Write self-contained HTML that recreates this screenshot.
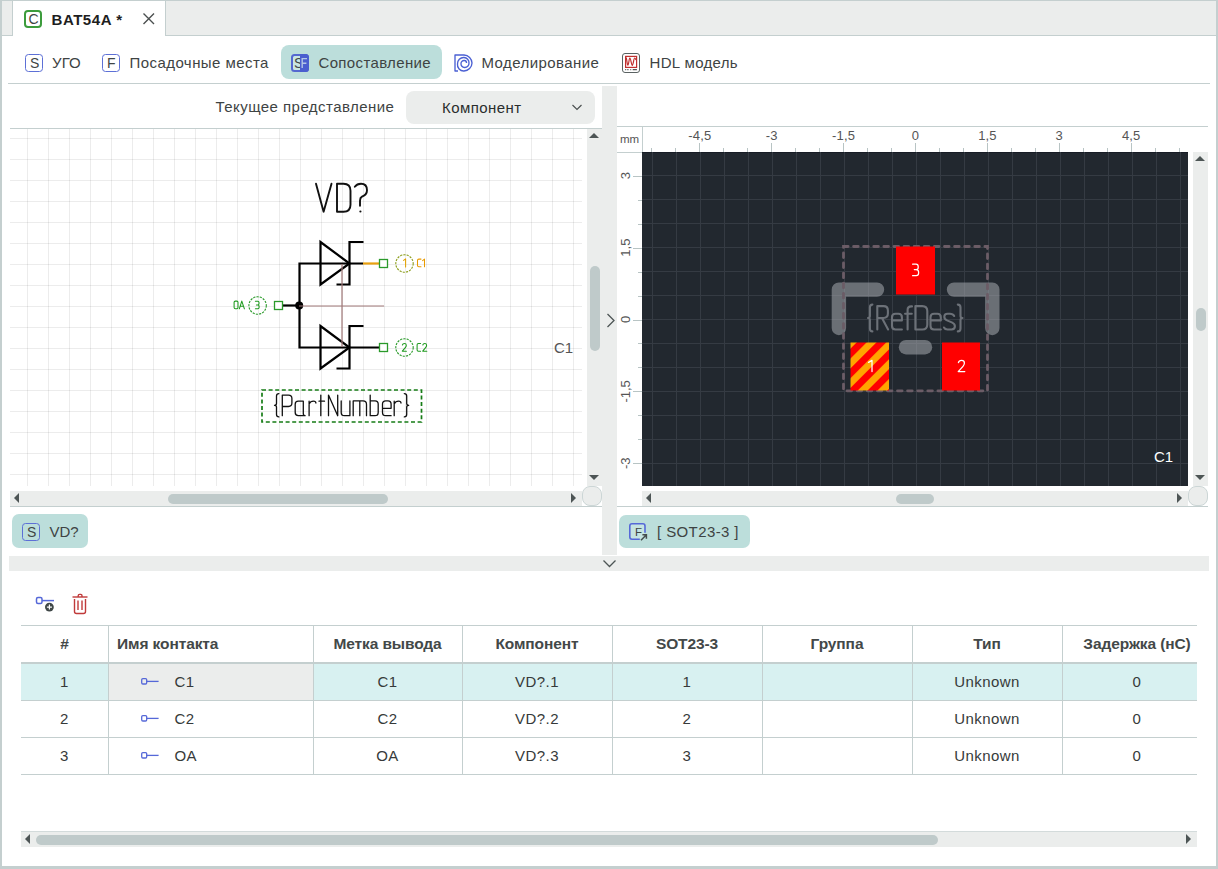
<!DOCTYPE html>
<html><head><meta charset="utf-8"><style>
html,body{margin:0;padding:0;width:1218px;height:869px;overflow:hidden;background:#fff;font-family:"Liberation Sans", sans-serif;}
#root{position:relative;width:1218px;height:869px;overflow:hidden;}
svg text{font-family:"Liberation Sans", sans-serif;}
</style></head><body><div id="root">
<div style="position:absolute;left:0px;top:0px;width:1218px;height:869px;background:#ffffff;"></div>
<div style="position:absolute;left:0px;top:0px;width:1218px;height:36px;background:#ebedec;"></div>
<div style="position:absolute;left:0px;top:35px;width:1218px;height:1px;background:#c4cfcf;"></div>
<div style="position:absolute;left:12px;top:1px;width:154px;height:35px;background:#ffffff;border-left:1px solid #c4cfcf;border-right:1px solid #c4cfcf;box-sizing:border-box;"></div>
<div style="position:absolute;left:0px;top:0px;width:1218px;height:1px;background:#c4cfcf;"></div>
<div style="position:absolute;left:0px;top:0px;width:2px;height:869px;background:#c4cfcf;"></div>
<div style="position:absolute;left:1216px;top:0px;width:2px;height:869px;background:#c4cfcf;"></div>
<div style="position:absolute;left:0px;top:866px;width:1218px;height:3px;background:#c4cfcf;"></div>
<div style="position:absolute;left:24px;top:10px;width:18px;height:18px;background:transparent;border:2px solid #3c9c3c;border-radius:4px;box-sizing:border-box;"></div>
<div style="position:absolute;left:25px;top:54px;width:18px;height:18px;background:transparent;border:1.7px solid #5d70d6;border-radius:3.5px;box-sizing:border-box;"></div>
<div style="position:absolute;left:102px;top:54px;width:18px;height:18px;background:transparent;border:1.7px solid #5d70d6;border-radius:3.5px;box-sizing:border-box;"></div>
<div style="position:absolute;left:281px;top:45px;width:161px;height:34px;background:#bcdedb;border-radius:8px;"></div>
<div style="position:absolute;left:291px;top:54px;width:18px;height:18px;background:#c9e6e2;border:2px solid #5568d0;border-radius:3.5px;box-sizing:border-box;"></div>
<div style="position:absolute;left:300px;top:54px;width:9px;height:18px;background:#4a5ecf;border-radius:0 3.5px 3.5px 0;"></div>
<div style="position:absolute;left:622px;top:53px;width:18px;height:20px;background:#fff;border:1.7px solid #5a6262;border-radius:3px;box-sizing:border-box;"></div>
<div style="position:absolute;left:8px;top:83px;width:1202px;height:1px;background:#c4cfcf;"></div>
<div style="position:absolute;left:406px;top:91px;width:189px;height:33px;background:#ebedec;border-radius:8px;"></div>
<div style="position:absolute;left:10px;top:128px;width:592px;height:1px;background:#c4cfcf;"></div>
<div style="position:absolute;left:602px;top:86px;width:15px;height:469px;background:#ebedec;"></div>
<div style="position:absolute;left:587px;top:129px;width:15px;height:357px;background:#ebedec;"></div>
<div style="position:absolute;left:590px;top:266px;width:10px;height:85px;background:#bfcaca;border-radius:5px;"></div>
<div style="position:absolute;left:10px;top:491px;width:572px;height:15px;background:#ebedec;"></div>
<div style="position:absolute;left:168px;top:494px;width:220px;height:10px;background:#bfcaca;border-radius:5px;"></div>
<div style="position:absolute;left:582px;top:486px;width:20px;height:20px;background:#ebedec;border:1px solid #ccd6d6;border-radius:8px;box-sizing:border-box;"></div>
<div style="position:absolute;left:10px;top:506px;width:592px;height:1px;background:#c4cfcf;"></div>
<div style="position:absolute;left:12px;top:514px;width:76px;height:34px;background:#bcdedb;border-radius:7px;"></div>
<div style="position:absolute;left:22px;top:523px;width:18px;height:18px;background:transparent;border:1.7px solid #5d70d6;border-radius:3.5px;box-sizing:border-box;"></div>
<div style="position:absolute;left:617px;top:126px;width:591px;height:1px;background:#c4cfcf;"></div>
<div style="position:absolute;left:617px;top:152px;width:25px;height:1px;background:#c4cfcf;"></div>
<div style="position:absolute;left:642px;top:126px;width:1px;height:26px;background:#c4cfcf;"></div>
<div style="position:absolute;left:642px;top:152px;width:546px;height:334px;background:#22282f;box-shadow: inset 0 1px 0 #171c25;"></div>
<div style="position:absolute;left:1193px;top:152px;width:15px;height:334px;background:#ebedec;"></div>
<div style="position:absolute;left:1196px;top:308px;width:10px;height:23px;background:#bfcaca;border-radius:5px;"></div>
<div style="position:absolute;left:642px;top:491px;width:546px;height:15px;background:#ebedec;"></div>
<div style="position:absolute;left:896px;top:494px;width:38px;height:10px;background:#bfcaca;border-radius:5px;"></div>
<div style="position:absolute;left:1188px;top:486px;width:20px;height:20px;background:#ebedec;border:1px solid #ccd6d6;border-radius:8px;box-sizing:border-box;"></div>
<div style="position:absolute;left:617px;top:506px;width:591px;height:1px;background:#c4cfcf;"></div>
<div style="position:absolute;left:619px;top:515px;width:131px;height:33px;background:#bcdedb;border-radius:7px;"></div>
<div style="position:absolute;left:9px;top:556px;width:1200px;height:15px;background:#ebedec;"></div>
<div style="position:absolute;left:21px;top:663px;width:1176px;height:37px;background:#d8f1f1;"></div>
<div style="position:absolute;left:109px;top:663px;width:204px;height:37px;background:#ebedec;"></div>
<div style="position:absolute;left:21px;top:625px;width:1176px;height:1px;background:#c4cfcf;"></div>
<div style="position:absolute;left:21px;top:662px;width:1176px;height:2px;background:#c4cfcf;"></div>
<div style="position:absolute;left:21px;top:700px;width:1176px;height:1px;background:#c4cfcf;"></div>
<div style="position:absolute;left:21px;top:737px;width:1176px;height:1px;background:#c4cfcf;"></div>
<div style="position:absolute;left:21px;top:774px;width:1176px;height:1px;background:#c4cfcf;"></div>
<div style="position:absolute;left:108px;top:625px;width:1px;height:150px;background:#c4cfcf;"></div>
<div style="position:absolute;left:313px;top:625px;width:1px;height:150px;background:#c4cfcf;"></div>
<div style="position:absolute;left:462px;top:625px;width:1px;height:150px;background:#c4cfcf;"></div>
<div style="position:absolute;left:612px;top:625px;width:1px;height:150px;background:#c4cfcf;"></div>
<div style="position:absolute;left:762px;top:625px;width:1px;height:150px;background:#c4cfcf;"></div>
<div style="position:absolute;left:912px;top:625px;width:1px;height:150px;background:#c4cfcf;"></div>
<div style="position:absolute;left:1062px;top:625px;width:1px;height:150px;background:#c4cfcf;"></div>
<div style="position:absolute;left:21px;top:831px;width:1176px;height:16px;background:#ebedec;"></div>
<div style="position:absolute;left:21px;top:831px;width:1176px;height:1px;background:#d3dbdb;"></div>
<div style="position:absolute;left:36px;top:835px;width:902px;height:10px;background:#bfcaca;border-radius:5px;"></div>
<svg style="position:absolute;left:0;top:0" width="1218" height="869" viewBox="0 0 1218 869">
<path d="M143.5 13.5 L154 24 M154 13.5 L143.5 24" stroke="#4a4f4f" stroke-width="1.4" fill="none"/>
<path d="M302.2 68 V58.6 H307 M302.2 63.3 H306.4" fill="none" stroke="#b3c6e6" stroke-width="1.4"/>
<g fill="none" stroke="#4b60d3" stroke-width="1.35" stroke-linejoin="round"><path d="M458 71 H455 V55 H464 A8.2 8.2 0 0 1 472 63 A8.2 8.2 0 0 1 464 71 A6.2 6.2 0 0 1 457.5 64 A6.2 6.2 0 0 1 464 57.5 A5.2 5.2 0 0 1 469 63 A4.2 4.2 0 0 1 464.5 67.5 A3.6 3.6 0 0 1 461 63.5 A3 3 0 0 1 464.5 60.5 A2.4 2.4 0 0 1 466.5 63"/></g>
<rect x="625.6" y="56.4" width="11" height="11" fill="none" stroke="#c03030" stroke-width="1.2"/><path d="M626.3 57.5 C627 62 627.4 65.3 628 65 C629 64 629 58 629.8 58 C630.8 58 631.4 65.3 632.3 65.3 C633.3 65.3 633.7 58 634.7 58 C635.3 58 635.6 59 636 60" fill="none" stroke="#c03030" stroke-width="1.2"/><path d="M625.2 69.6 H626.2 M627.3 69.6 H628.5 M630.3 69.6 H631.2 M632.7 69.6 H636.9" stroke="#555" stroke-width="1.1"/>
<path d="M572.5 105 L577 109.5 L581.5 105" fill="none" stroke="#4a4f4f" stroke-width="1.15"/>
<rect x="27" y="129" width="1" height="357" fill="#000" fill-opacity="0.075"/>
<rect x="48" y="129" width="1" height="357" fill="#000" fill-opacity="0.075"/>
<rect x="69" y="129" width="1" height="357" fill="#000" fill-opacity="0.075"/>
<rect x="90" y="129" width="1" height="357" fill="#000" fill-opacity="0.075"/>
<rect x="111" y="129" width="1" height="357" fill="#000" fill-opacity="0.075"/>
<rect x="132" y="129" width="1" height="357" fill="#000" fill-opacity="0.075"/>
<rect x="153" y="129" width="1" height="357" fill="#000" fill-opacity="0.075"/>
<rect x="174" y="129" width="1" height="357" fill="#000" fill-opacity="0.075"/>
<rect x="195" y="129" width="1" height="357" fill="#000" fill-opacity="0.075"/>
<rect x="216" y="129" width="1" height="357" fill="#000" fill-opacity="0.075"/>
<rect x="237" y="129" width="1" height="357" fill="#000" fill-opacity="0.075"/>
<rect x="258" y="129" width="1" height="357" fill="#000" fill-opacity="0.075"/>
<rect x="279" y="129" width="1" height="357" fill="#000" fill-opacity="0.075"/>
<rect x="300" y="129" width="1" height="357" fill="#000" fill-opacity="0.075"/>
<rect x="321" y="129" width="1" height="357" fill="#000" fill-opacity="0.075"/>
<rect x="342" y="129" width="1" height="357" fill="#000" fill-opacity="0.075"/>
<rect x="363" y="129" width="1" height="357" fill="#000" fill-opacity="0.075"/>
<rect x="384" y="129" width="1" height="357" fill="#000" fill-opacity="0.075"/>
<rect x="405" y="129" width="1" height="357" fill="#000" fill-opacity="0.075"/>
<rect x="426" y="129" width="1" height="357" fill="#000" fill-opacity="0.075"/>
<rect x="447" y="129" width="1" height="357" fill="#000" fill-opacity="0.075"/>
<rect x="468" y="129" width="1" height="357" fill="#000" fill-opacity="0.075"/>
<rect x="489" y="129" width="1" height="357" fill="#000" fill-opacity="0.075"/>
<rect x="510" y="129" width="1" height="357" fill="#000" fill-opacity="0.075"/>
<rect x="531" y="129" width="1" height="357" fill="#000" fill-opacity="0.075"/>
<rect x="552" y="129" width="1" height="357" fill="#000" fill-opacity="0.075"/>
<rect x="573" y="129" width="1" height="357" fill="#000" fill-opacity="0.075"/>
<rect x="10" y="138" width="572" height="1" fill="#000" fill-opacity="0.075"/>
<rect x="10" y="159" width="572" height="1" fill="#000" fill-opacity="0.075"/>
<rect x="10" y="180" width="572" height="1" fill="#000" fill-opacity="0.075"/>
<rect x="10" y="201" width="572" height="1" fill="#000" fill-opacity="0.075"/>
<rect x="10" y="222" width="572" height="1" fill="#000" fill-opacity="0.075"/>
<rect x="10" y="243" width="572" height="1" fill="#000" fill-opacity="0.075"/>
<rect x="10" y="264" width="572" height="1" fill="#000" fill-opacity="0.075"/>
<rect x="10" y="285" width="572" height="1" fill="#000" fill-opacity="0.075"/>
<rect x="10" y="306" width="572" height="1" fill="#000" fill-opacity="0.075"/>
<rect x="10" y="327" width="572" height="1" fill="#000" fill-opacity="0.075"/>
<rect x="10" y="348" width="572" height="1" fill="#000" fill-opacity="0.075"/>
<rect x="10" y="369" width="572" height="1" fill="#000" fill-opacity="0.075"/>
<rect x="10" y="390" width="572" height="1" fill="#000" fill-opacity="0.075"/>
<rect x="10" y="411" width="572" height="1" fill="#000" fill-opacity="0.075"/>
<rect x="10" y="432" width="572" height="1" fill="#000" fill-opacity="0.075"/>
<rect x="10" y="453" width="572" height="1" fill="#000" fill-opacity="0.075"/>
<rect x="10" y="474" width="572" height="1" fill="#000" fill-opacity="0.075"/>
<path d="M589 138 L594 133 L599 138 Z" fill="#4d5555"/>
<path d="M589 475 L594 480 L599 475 Z" fill="#4d5555"/>
<path d="M607.5 314 L614 320.5 L607.5 327" fill="none" stroke="#4d5555" stroke-width="1.3"/>
<path d="M19 493 L14 498 L19 503 Z" fill="#4d5555"/>
<path d="M571 493 L576 498 L571 503 Z" fill="#4d5555"/>
<rect x="652" y="152" width="1" height="334" fill="#353b43"/>
<rect x="676" y="152" width="1" height="334" fill="#353b43"/>
<rect x="700" y="152" width="1" height="334" fill="#353b43"/>
<rect x="724" y="152" width="1" height="334" fill="#353b43"/>
<rect x="748" y="152" width="1" height="334" fill="#353b43"/>
<rect x="772" y="152" width="1" height="334" fill="#353b43"/>
<rect x="796" y="152" width="1" height="334" fill="#353b43"/>
<rect x="820" y="152" width="1" height="334" fill="#353b43"/>
<rect x="844" y="152" width="1" height="334" fill="#353b43"/>
<rect x="868" y="152" width="1" height="334" fill="#353b43"/>
<rect x="892" y="152" width="1" height="334" fill="#353b43"/>
<rect x="916" y="152" width="1" height="334" fill="#353b43"/>
<rect x="940" y="152" width="1" height="334" fill="#353b43"/>
<rect x="964" y="152" width="1" height="334" fill="#353b43"/>
<rect x="988" y="152" width="1" height="334" fill="#353b43"/>
<rect x="1012" y="152" width="1" height="334" fill="#353b43"/>
<rect x="1036" y="152" width="1" height="334" fill="#353b43"/>
<rect x="1060" y="152" width="1" height="334" fill="#353b43"/>
<rect x="1084" y="152" width="1" height="334" fill="#353b43"/>
<rect x="1108" y="152" width="1" height="334" fill="#353b43"/>
<rect x="1132" y="152" width="1" height="334" fill="#353b43"/>
<rect x="1156" y="152" width="1" height="334" fill="#353b43"/>
<rect x="1180" y="152" width="1" height="334" fill="#353b43"/>
<rect x="642" y="175" width="546" height="1" fill="#353b43"/>
<rect x="642" y="199" width="546" height="1" fill="#353b43"/>
<rect x="642" y="223" width="546" height="1" fill="#353b43"/>
<rect x="642" y="247" width="546" height="1" fill="#353b43"/>
<rect x="642" y="271" width="546" height="1" fill="#353b43"/>
<rect x="642" y="295" width="546" height="1" fill="#353b43"/>
<rect x="642" y="319" width="546" height="1" fill="#353b43"/>
<rect x="642" y="343" width="546" height="1" fill="#353b43"/>
<rect x="642" y="367" width="546" height="1" fill="#353b43"/>
<rect x="642" y="391" width="546" height="1" fill="#353b43"/>
<rect x="642" y="415" width="546" height="1" fill="#353b43"/>
<rect x="642" y="439" width="546" height="1" fill="#353b43"/>
<rect x="642" y="463" width="546" height="1" fill="#353b43"/>
<rect x="651" y="148" width="1" height="4" fill="#b8c4c4"/>
<rect x="675" y="148" width="1" height="4" fill="#b8c4c4"/>
<rect x="699" y="143" width="1" height="9" fill="#b8c4c4"/>
<rect x="723" y="148" width="1" height="4" fill="#b8c4c4"/>
<rect x="747" y="148" width="1" height="4" fill="#b8c4c4"/>
<rect x="771" y="143" width="1" height="9" fill="#b8c4c4"/>
<rect x="795" y="148" width="1" height="4" fill="#b8c4c4"/>
<rect x="819" y="148" width="1" height="4" fill="#b8c4c4"/>
<rect x="843" y="143" width="1" height="9" fill="#b8c4c4"/>
<rect x="867" y="148" width="1" height="4" fill="#b8c4c4"/>
<rect x="891" y="148" width="1" height="4" fill="#b8c4c4"/>
<rect x="915" y="143" width="1" height="9" fill="#b8c4c4"/>
<rect x="939" y="148" width="1" height="4" fill="#b8c4c4"/>
<rect x="963" y="148" width="1" height="4" fill="#b8c4c4"/>
<rect x="987" y="143" width="1" height="9" fill="#b8c4c4"/>
<rect x="1011" y="148" width="1" height="4" fill="#b8c4c4"/>
<rect x="1035" y="148" width="1" height="4" fill="#b8c4c4"/>
<rect x="1059" y="143" width="1" height="9" fill="#b8c4c4"/>
<rect x="1083" y="148" width="1" height="4" fill="#b8c4c4"/>
<rect x="1107" y="148" width="1" height="4" fill="#b8c4c4"/>
<rect x="1131" y="143" width="1" height="9" fill="#b8c4c4"/>
<rect x="1155" y="148" width="1" height="4" fill="#b8c4c4"/>
<rect x="1179" y="148" width="1" height="4" fill="#b8c4c4"/>
<text x="699.8" y="140" font-size="13" fill="#555" text-anchor="middle" font-family="Liberation Sans" letter-spacing="0.15">-4,5</text>
<text x="771.7" y="140" font-size="13" fill="#555" text-anchor="middle" font-family="Liberation Sans" letter-spacing="0.15">-3</text>
<text x="843.6" y="140" font-size="13" fill="#555" text-anchor="middle" font-family="Liberation Sans" letter-spacing="0.15">-1,5</text>
<text x="915.5" y="140" font-size="13" fill="#555" text-anchor="middle" font-family="Liberation Sans" letter-spacing="0.15">0</text>
<text x="987.4" y="140" font-size="13" fill="#555" text-anchor="middle" font-family="Liberation Sans" letter-spacing="0.15">1,5</text>
<text x="1059.3" y="140" font-size="13" fill="#555" text-anchor="middle" font-family="Liberation Sans" letter-spacing="0.15">3</text>
<text x="1131.2" y="140" font-size="13" fill="#555" text-anchor="middle" font-family="Liberation Sans" letter-spacing="0.15">4,5</text>
<rect x="633" y="176" width="9" height="1" fill="#b8c4c4"/>
<rect x="638" y="200" width="4" height="1" fill="#b8c4c4"/>
<rect x="638" y="224" width="4" height="1" fill="#b8c4c4"/>
<rect x="633" y="248" width="9" height="1" fill="#b8c4c4"/>
<rect x="638" y="272" width="4" height="1" fill="#b8c4c4"/>
<rect x="638" y="296" width="4" height="1" fill="#b8c4c4"/>
<rect x="633" y="320" width="9" height="1" fill="#b8c4c4"/>
<rect x="638" y="343" width="4" height="1" fill="#b8c4c4"/>
<rect x="638" y="367" width="4" height="1" fill="#b8c4c4"/>
<rect x="633" y="391" width="9" height="1" fill="#b8c4c4"/>
<rect x="638" y="415" width="4" height="1" fill="#b8c4c4"/>
<rect x="638" y="439" width="4" height="1" fill="#b8c4c4"/>
<rect x="633" y="463" width="9" height="1" fill="#b8c4c4"/>
<text x="0" y="0" transform="translate(630 175.7) rotate(-90)" font-size="13" fill="#555" text-anchor="middle" font-family="Liberation Sans">3</text>
<text x="0" y="0" transform="translate(630 247.6) rotate(-90)" font-size="13" fill="#555" text-anchor="middle" font-family="Liberation Sans">1,5</text>
<text x="0" y="0" transform="translate(630 319.5) rotate(-90)" font-size="13" fill="#555" text-anchor="middle" font-family="Liberation Sans">0</text>
<text x="0" y="0" transform="translate(630 391.4) rotate(-90)" font-size="13" fill="#555" text-anchor="middle" font-family="Liberation Sans">-1,5</text>
<text x="0" y="0" transform="translate(630 463.3) rotate(-90)" font-size="13" fill="#555" text-anchor="middle" font-family="Liberation Sans">-3</text>
<g stroke="#a5a9ae" stroke-opacity="0.55" stroke-width="14.4" stroke-linecap="round" fill="none"><path d="M877 289.6 H838.9 V328" stroke-linejoin="round"/><path d="M954 289.6 H992.3 V328" stroke-linejoin="round"/><path d="M906 347.2 H925"/></g>
<rect x="843.5" y="246.5" width="144" height="144.3" fill="none" stroke="#6b5c66" stroke-width="2.8" stroke-linecap="round" stroke-dasharray="4.6 5.5"/>
<rect x="896" y="246.5" width="39" height="48" fill="#ff0000"/>
<rect x="942" y="342.5" width="38" height="48" fill="#ff0000"/>
<defs><pattern id="stripe" patternUnits="userSpaceOnUse" width="13.9" height="13.9" patternTransform="rotate(45)"><rect width="13.9" height="13.9" fill="#ffa500"/><rect width="7" height="13.9" fill="#ff0000"/></pattern></defs>
<rect x="850.5" y="342.5" width="38.5" height="48" fill="url(#stripe)"/>
<g fill="none" stroke="#6c7178" stroke-width="2.1" stroke-linecap="round" stroke-linejoin="round"><path d="M872.4 304.6 Q869.9 304.6 869.9 307.5 V316 Q869.9 318 868 318 Q869.9 318 869.9 320 V328.5 Q869.9 331.4 872.4 331.4"/><path d="M877.3 329.5 V306.1 H883.5 Q887.9 306.1 887.9 310.5 V313.6 Q887.9 318 883.5 318 H877.3 M882 318 L888.1 329.5"/><path d="M901.9 329.5 H895.5 Q892 329.5 892 326 V317.3 Q892 313.8 895.5 313.8 H898.4 Q901.9 313.8 901.9 317.3 V320.4 H892"/><path d="M907.6 329.5 V310 Q907.6 306.4 911.2 306.4 H912 M905.1 313.8 H911.8"/><path d="M915.4 329.5 V306.1 H922.3 Q927.3 306.1 927.3 311.1 V324.5 Q927.3 329.5 922.3 329.5 Z"/><path d="M940.8 329.5 H934 Q930.5 329.5 930.5 326 V317.3 Q930.5 313.8 934 313.8 H937.3 Q940.8 313.8 940.8 317.3 V320.4 H930.5"/><path d="M954.2 316 Q953 313.8 950 313.8 H947.5 Q944.3 313.8 944.3 316.8 Q944.3 319.3 947 320.4 L951.8 322.4 Q954.9 323.7 954.9 326.3 Q954.9 329.5 951.5 329.5 H947.5 Q945 329.5 944 327.5"/><path d="M957.8 304.6 Q960.5 304.6 960.5 307.5 V316 Q960.5 318 962.5 318 Q960.5 318 960.5 320 V328.5 Q960.5 331.4 957.8 331.4"/></g>
<g fill="none" stroke="#fff" stroke-width="1.25" stroke-linecap="round" stroke-linejoin="round"><path d="M912.6 264.2 H916 Q918.2 264.2 918.2 266.5 V267.4 Q918.2 269.6 916 269.6 H914.3 M916 269.6 Q918.6 269.6 918.6 272.1 V273.3 Q918.6 275.7 916.2 275.7 H912.6"/><path d="M868.6 362.4 L872 360.4 V371.6"/><path d="M958.4 362.6 Q959 360.4 961.5 360.4 Q964.4 360.4 964.4 363.1 Q964.4 364.7 963 366.3 L958.2 371.6 H964.8"/></g>
<path d="M1195 161 L1200 156 L1205 161 Z" fill="#4d5555"/>
<path d="M1195 475 L1200 480 L1205 475 Z" fill="#4d5555"/>
<path d="M651 493 L646 498 L651 503 Z" fill="#4d5555"/>
<path d="M1177 493 L1182 498 L1177 503 Z" fill="#4d5555"/>
<rect x="630" y="524" width="15" height="15" rx="2" fill="#c6e4e1"/><path d="M645 532.8 V526 Q645 523.8 642.8 523.8 H632 Q629.8 523.8 629.8 526 V537 Q629.8 539.2 632 539.2 H639.8" fill="none" stroke="#5568d8" stroke-width="1.6"/><path d="M641 540.2 L646.4 534.8 M642.4 534.8 H646.4 V538.8" fill="none" stroke="#454d4d" stroke-width="1.5"/>
<path d="M603.5 560.5 L609.5 566.5 L615.5 560.5" fill="none" stroke="#4d5555" stroke-width="1.3"/>
<g stroke="#000" stroke-width="2.2" fill="none" stroke-linecap="butt">
<path d="M299.5 305 V263.5 H363"/>
<path d="M320.5 242 V284.5 L349.5 263.5 Z" stroke-linejoin="miter"/>
<path d="M363.5 242 H349.5 V284.5 H336.5"/>
<path d="M299.5 305 V347.5 H379"/>
<path d="M320.5 326 V368.5 L349.5 347.5 Z"/>
<path d="M363.5 326 H349.5 V368.5 H336.5"/>
<path d="M282.5 305.5 H299"/>
</g>
<path d="M363 263.5 H379" stroke="#e8a010" stroke-width="2.2"/>
<circle cx="299.2" cy="305.5" r="4" fill="#000"/>
<path d="M299 306 H384 M342 264 V347" stroke="#a07878" stroke-width="1.2" fill="none"/>
<g fill="#fff" stroke="#2a9a2a" stroke-width="1.3"><rect x="379.5" y="259.5" width="8" height="8"/><rect x="379.5" y="343.5" width="8" height="8"/><rect x="274.5" y="301.5" width="8" height="8"/></g>
<circle cx="404.5" cy="263.5" r="8.7" fill="none" stroke="#8c9e1c" stroke-width="1.1" stroke-dasharray="2.2 1.1"/>
<circle cx="404.5" cy="347.5" r="8.7" fill="none" stroke="#2a9a2a" stroke-width="1.1" stroke-dasharray="2.2 1.1"/>
<circle cx="257.6" cy="305.5" r="8.7" fill="none" stroke="#2a9a2a" stroke-width="1.1" stroke-dasharray="2.2 1.1"/>
<g fill="none" stroke-width="1.05" stroke-linecap="round" stroke-linejoin="round"><path stroke="#e0a000" d="M403.6 260.4 L405.6 258.9 V266.9"/><path stroke="#e89a00" d="M421 259.1 H418.8 Q417.5 259.1 417.5 260.4 V265.5 Q417.5 266.8 418.8 266.8 H421 M422.6 260.6 L424.5 259.1 V266.8"/><path stroke="#1f9a1f" d="M402.4 345 Q402.8 343.4 404.4 343.4 Q406.3 343.4 406.3 345.2 Q406.3 346.4 405.3 347.6 L402.3 351.2 H406.4"/><path stroke="#1f9a1f" d="M420.6 343.5 H418.4 Q417.1 343.5 417.1 344.8 V349.9 Q417.1 351.2 418.4 351.2 H420.6 M422.8 345 Q423.2 343.5 424.8 343.5 Q426.6 343.5 426.6 345.2 Q426.6 346.4 425.6 347.6 L422.7 351.2 H426.8"/><path stroke="#1f9a1f" d="M235.4 301.1 H236.8 Q238 301.1 238 302.3 V307.6 Q238 308.8 236.8 308.8 H235.4 Q234.1 308.8 234.1 307.6 V302.3 Q234.1 301.1 235.4 301.1 Z M239.3 308.8 L241.8 301.1 L244.4 308.8 M240.2 306.3 H243.5"/><path stroke="#1f9a1f" d="M255.4 301.2 H257.8 Q259 301.2 259 302.4 V303.7 Q259 304.9 257.8 304.9 H256.4 M257.8 304.9 Q259.1 304.9 259.1 306.1 V307.6 Q259.1 308.8 257.9 308.8 H255.4"/></g>
<g stroke="#111" stroke-width="1.9" fill="none" stroke-linecap="round" stroke-linejoin="round" transform="translate(0 0.7)"><path d="M316 183 L323.6 211 L331.5 183"/><path d="M337 183 H343.5 Q350.5 183 350.5 190 V204 Q350.5 211 343.5 211 H337 Z"/><path d="M354.8 186 Q357 183 361 183 Q367 183 367 189.5 Q367 194 362 196 Q360 197 360 200 V205"/></g>
<circle cx="360.4" cy="211.5" r="1.1" fill="#111"/>
<rect x="262" y="390" width="159.5" height="32" fill="none" stroke="#167c16" stroke-width="1.7" stroke-dasharray="4 2.6"/>
<g fill="none" stroke="#111" stroke-width="1.3" stroke-linecap="round" stroke-linejoin="round"><path d="M278.9 393.6 Q276.5 393.6 276.5 396 V403.5 Q276.5 405.3 274.5 405.3 Q276.5 405.3 276.5 407.1 V414.5 Q276.5 416.9 278.9 416.9"/><path d="M282.3 415.7 V395.1 H288.5 Q291.9 395.1 291.9 398.5 V403.1 Q291.9 406.5 288.5 406.5 H282.3"/><path d="M303.3 401.2 H298.3 Q295.2 401.2 295.2 404.3 V412.6 Q295.2 415.7 298.3 415.7 H303.3 M303.3 401.2 V413.5 Q303.3 415.7 305.1 415.7"/><path d="M309.1 415.7 V401.2 M309.1 404 Q310.5 401.2 313.5 401.2 Q315.9 401.2 315.9 403.1"/><path d="M320.8 395.1 V415.7 M319 401.2 H324.5"/><path d="M328.5 415.7 V395.1 L337.7 415.7 V395.1"/><path d="M341.2 400.9 V412.5 Q341.2 415.7 344.4 415.7 H349.9 V400.9"/><path d="M353.2 415.7 V400.9 H363 Q366.5 400.9 366.5 404.4 V415.7 M359.8 400.9 V415.7"/><path d="M370.2 395.1 V415.7 H375 Q378.2 415.7 378.2 412.5 V404.1 Q378.2 400.9 375 400.9 H370.2"/><path d="M391.1 415.7 H385.7 Q382.5 415.7 382.5 412.5 V404.1 Q382.5 400.9 385.7 400.9 H388 Q391.1 400.9 391.1 404.1 V408.3 H382.5"/><path d="M394.2 415.7 V401.2 M394.2 404 Q395.6 401.2 398.6 401.2 Q401 401.2 401 403.1"/><path d="M404.3 393.6 Q406.7 393.6 406.7 396 V403.5 Q406.7 405.3 408.7 405.3 Q406.7 405.3 406.7 407.1 V414.5 Q406.7 416.9 404.3 416.9"/></g>
<g fill="none" stroke="#5568d8" stroke-width="1.5"><rect x="36.5" y="597.5" width="5.5" height="6" rx="1.5"/><path d="M42 600.6 H54"/></g>
<circle cx="49.4" cy="607.1" r="4.4" fill="#3f4747"/><path d="M49.4 604.6 V609.6 M46.9 607.1 H51.9" stroke="#fff" stroke-width="1.2"/>
<g fill="none" stroke="#c03a3a" stroke-width="1.4"><path d="M72.5 597 H87.5"/><path d="M78.2 597 V595.8 Q78.2 594.4 79.5 594.4 H80.8 Q82 594.4 82 595.8 V597"/><path d="M74.5 599 V611.5 Q74.5 613.5 76.5 613.5 H83.5 Q85.5 613.5 85.5 611.5 V599"/><path d="M78 600.5 V610 M82 600.5 V610"/></g>
<g fill="none" stroke="#5568d8" stroke-width="1.3"><rect x="141.7" y="678.6" width="5" height="5.4" rx="1.2"/><path d="M146.7 681.4 H158.6"/></g>
<g fill="none" stroke="#5568d8" stroke-width="1.3"><rect x="141.7" y="715.6" width="5" height="5.4" rx="1.2"/><path d="M146.7 718.4 H158.6"/></g>
<g fill="none" stroke="#5568d8" stroke-width="1.3"><rect x="141.7" y="752.6" width="5" height="5.4" rx="1.2"/><path d="M146.7 755.4 H158.6"/></g>
<path d="M30 834 L25 839 L30 844 Z" fill="#4d5555"/>
<path d="M1186 834 L1191 839 L1186 844 Z" fill="#4d5555"/>
</svg>
<div style="position:absolute;left:28.5px;top:12.0px;font-size:14px;line-height:14px;color:#3f4545;font-weight:400;letter-spacing:0px;white-space:nowrap;">C</div>
<div style="position:absolute;left:51.5px;top:12.0px;font-size:15px;line-height:15px;color:#1e1e1e;font-weight:700;letter-spacing:0.55px;white-space:nowrap;">BAT54A *</div>
<div style="position:absolute;left:30px;top:56.0px;font-size:14px;line-height:14px;color:#3f4545;font-weight:400;letter-spacing:0px;white-space:nowrap;">S</div>
<div style="position:absolute;left:52px;top:55.0px;font-size:15px;line-height:15px;color:#3e4343;font-weight:400;letter-spacing:0.1px;white-space:nowrap;">УГО</div>
<div style="position:absolute;left:107px;top:56.0px;font-size:14px;line-height:14px;color:#3f4545;font-weight:400;letter-spacing:0px;white-space:nowrap;">F</div>
<div style="position:absolute;left:129.5px;top:55.0px;font-size:15px;line-height:15px;color:#3e4343;font-weight:400;letter-spacing:0.44px;white-space:nowrap;">Посадочные места</div>
<div style="position:absolute;left:294px;top:56.0px;font-size:14px;line-height:14px;color:#3f4545;font-weight:400;letter-spacing:0px;white-space:nowrap;width:6px;overflow:hidden;">S</div>
<div style="position:absolute;left:318.5px;top:55.0px;font-size:15px;line-height:15px;color:#3e4343;font-weight:400;letter-spacing:0.35px;white-space:nowrap;">Сопоставление</div>
<div style="position:absolute;left:481.5px;top:55.0px;font-size:15px;line-height:15px;color:#3e4343;font-weight:400;letter-spacing:0.43px;white-space:nowrap;">Моделирование</div>
<div style="position:absolute;left:649.5px;top:55.0px;font-size:15px;line-height:15px;color:#3e4343;font-weight:400;letter-spacing:0.34px;white-space:nowrap;">HDL модель</div>
<div style="position:absolute;left:215.5px;top:99.0px;font-size:15px;line-height:15px;color:#3e4343;font-weight:400;letter-spacing:0.45px;white-space:nowrap;">Текущее представление</div>
<div style="position:absolute;left:442px;top:100.0px;font-size:15px;line-height:15px;color:#2a2d2d;font-weight:400;letter-spacing:0.43px;white-space:nowrap;">Компонент</div>
<div style="position:absolute;left:27px;top:525.0px;font-size:14px;line-height:14px;color:#3f4545;font-weight:400;letter-spacing:0px;white-space:nowrap;">S</div>
<div style="position:absolute;left:49.5px;top:524.0px;font-size:15px;line-height:15px;color:#3e4343;font-weight:400;letter-spacing:-0.1px;white-space:nowrap;">VD?</div>
<div style="position:absolute;left:554px;top:340.0px;font-size:15px;line-height:15px;color:#555;font-weight:400;letter-spacing:-0.2px;white-space:nowrap;">C1</div>
<div style="position:absolute;left:620px;top:134.25px;font-size:11.5px;line-height:11.5px;color:#555;font-weight:400;letter-spacing:0px;white-space:nowrap;">mm</div>
<div style="position:absolute;left:1154px;top:449.0px;font-size:15px;line-height:15px;color:#ffffff;font-weight:400;letter-spacing:-0.1px;white-space:nowrap;">C1</div>
<div style="position:absolute;left:635px;top:526.85px;font-size:11.5px;line-height:11.5px;color:#3f4545;font-weight:400;letter-spacing:0px;white-space:nowrap;">F</div>
<div style="position:absolute;left:657px;top:523.5px;font-size:15px;line-height:15px;color:#3e4343;font-weight:400;letter-spacing:0.4px;white-space:nowrap;">[ SOT23-3 ]</div>
<div style="position:absolute;left:21px;top:636.05px;width:87px;text-align:center;font-size:15.5px;line-height:15.5px;color:#434848;font-weight:700;letter-spacing:-0.1px;white-space:nowrap;">#</div>
<div style="position:absolute;left:117px;top:636.05px;font-size:15.5px;line-height:15.5px;color:#434848;font-weight:700;letter-spacing:-0.1px;white-space:nowrap;">Имя контакта</div>
<div style="position:absolute;left:313px;top:636.05px;width:149px;text-align:center;font-size:15.5px;line-height:15.5px;color:#434848;font-weight:700;letter-spacing:-0.1px;white-space:nowrap;">Метка вывода</div>
<div style="position:absolute;left:462px;top:636.05px;width:150px;text-align:center;font-size:15.5px;line-height:15.5px;color:#434848;font-weight:700;letter-spacing:-0.1px;white-space:nowrap;">Компонент</div>
<div style="position:absolute;left:612px;top:636.05px;width:150px;text-align:center;font-size:15.5px;line-height:15.5px;color:#434848;font-weight:700;letter-spacing:-0.1px;white-space:nowrap;">SOT23-3</div>
<div style="position:absolute;left:762px;top:636.05px;width:150px;text-align:center;font-size:15.5px;line-height:15.5px;color:#434848;font-weight:700;letter-spacing:-0.1px;white-space:nowrap;">Группа</div>
<div style="position:absolute;left:912px;top:636.05px;width:150px;text-align:center;font-size:15.5px;line-height:15.5px;color:#434848;font-weight:700;letter-spacing:-0.1px;white-space:nowrap;">Тип</div>
<div style="position:absolute;left:1062px;top:636.05px;width:150px;text-align:center;font-size:15.5px;line-height:15.5px;color:#434848;font-weight:700;letter-spacing:-0.1px;white-space:nowrap;">Задержка (нС)</div>
<div style="position:absolute;left:21px;top:674.0px;width:87px;text-align:center;font-size:15px;line-height:15px;color:#363a3a;font-weight:400;letter-spacing:0.45px;white-space:nowrap;">1</div>
<div style="position:absolute;left:174.5px;top:674.0px;font-size:15px;line-height:15px;color:#363a3a;font-weight:400;letter-spacing:0.3px;white-space:nowrap;">C1</div>
<div style="position:absolute;left:313px;top:674.0px;width:149px;text-align:center;font-size:15px;line-height:15px;color:#363a3a;font-weight:400;letter-spacing:0.45px;white-space:nowrap;">C1</div>
<div style="position:absolute;left:462px;top:674.0px;width:150px;text-align:center;font-size:15px;line-height:15px;color:#363a3a;font-weight:400;letter-spacing:0.45px;white-space:nowrap;">VD?.1</div>
<div style="position:absolute;left:612px;top:674.0px;width:150px;text-align:center;font-size:15px;line-height:15px;color:#363a3a;font-weight:400;letter-spacing:0.45px;white-space:nowrap;">1</div>
<div style="position:absolute;left:912px;top:674.0px;width:150px;text-align:center;font-size:15px;line-height:15px;color:#363a3a;font-weight:400;letter-spacing:0.45px;white-space:nowrap;">Unknown</div>
<div style="position:absolute;left:1062px;top:674.0px;width:150px;text-align:center;font-size:15px;line-height:15px;color:#363a3a;font-weight:400;letter-spacing:0.45px;white-space:nowrap;">0</div>
<div style="position:absolute;left:21px;top:711.0px;width:87px;text-align:center;font-size:15px;line-height:15px;color:#363a3a;font-weight:400;letter-spacing:0.45px;white-space:nowrap;">2</div>
<div style="position:absolute;left:174.5px;top:711.0px;font-size:15px;line-height:15px;color:#363a3a;font-weight:400;letter-spacing:0.3px;white-space:nowrap;">C2</div>
<div style="position:absolute;left:313px;top:711.0px;width:149px;text-align:center;font-size:15px;line-height:15px;color:#363a3a;font-weight:400;letter-spacing:0.45px;white-space:nowrap;">C2</div>
<div style="position:absolute;left:462px;top:711.0px;width:150px;text-align:center;font-size:15px;line-height:15px;color:#363a3a;font-weight:400;letter-spacing:0.45px;white-space:nowrap;">VD?.2</div>
<div style="position:absolute;left:612px;top:711.0px;width:150px;text-align:center;font-size:15px;line-height:15px;color:#363a3a;font-weight:400;letter-spacing:0.45px;white-space:nowrap;">2</div>
<div style="position:absolute;left:912px;top:711.0px;width:150px;text-align:center;font-size:15px;line-height:15px;color:#363a3a;font-weight:400;letter-spacing:0.45px;white-space:nowrap;">Unknown</div>
<div style="position:absolute;left:1062px;top:711.0px;width:150px;text-align:center;font-size:15px;line-height:15px;color:#363a3a;font-weight:400;letter-spacing:0.45px;white-space:nowrap;">0</div>
<div style="position:absolute;left:21px;top:748.0px;width:87px;text-align:center;font-size:15px;line-height:15px;color:#363a3a;font-weight:400;letter-spacing:0.45px;white-space:nowrap;">3</div>
<div style="position:absolute;left:174.5px;top:748.0px;font-size:15px;line-height:15px;color:#363a3a;font-weight:400;letter-spacing:0.3px;white-space:nowrap;">OA</div>
<div style="position:absolute;left:313px;top:748.0px;width:149px;text-align:center;font-size:15px;line-height:15px;color:#363a3a;font-weight:400;letter-spacing:0.45px;white-space:nowrap;">OA</div>
<div style="position:absolute;left:462px;top:748.0px;width:150px;text-align:center;font-size:15px;line-height:15px;color:#363a3a;font-weight:400;letter-spacing:0.45px;white-space:nowrap;">VD?.3</div>
<div style="position:absolute;left:612px;top:748.0px;width:150px;text-align:center;font-size:15px;line-height:15px;color:#363a3a;font-weight:400;letter-spacing:0.45px;white-space:nowrap;">3</div>
<div style="position:absolute;left:912px;top:748.0px;width:150px;text-align:center;font-size:15px;line-height:15px;color:#363a3a;font-weight:400;letter-spacing:0.45px;white-space:nowrap;">Unknown</div>
<div style="position:absolute;left:1062px;top:748.0px;width:150px;text-align:center;font-size:15px;line-height:15px;color:#363a3a;font-weight:400;letter-spacing:0.45px;white-space:nowrap;">0</div>
</div></body></html>
